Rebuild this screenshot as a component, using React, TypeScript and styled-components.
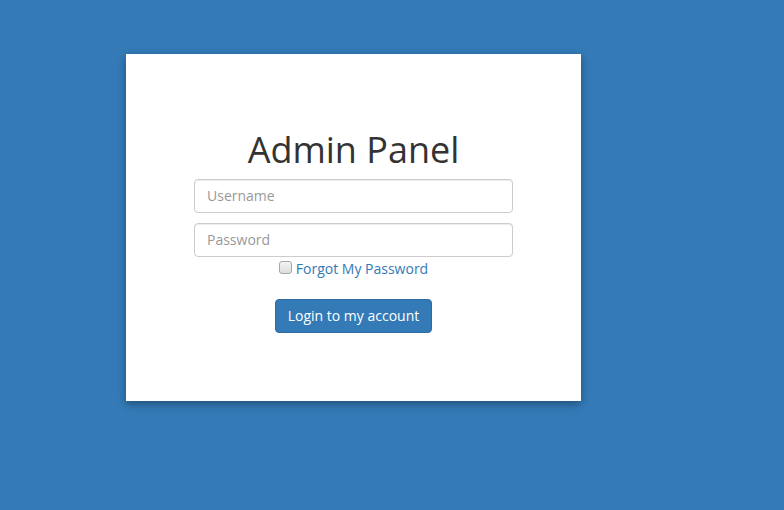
import React from "react";
import styled, { createGlobalStyle } from "styled-components";

const Global = createGlobalStyle`
  html, body { margin: 0; padding: 0; }
  body {
    background: #337ab7;
    font-family: "Open Sans", "Liberation Sans", sans-serif;
    font-size: 14px;
    color: #333;
    width: 784px;
    height: 510px;
    overflow: hidden;
  }
  * { box-sizing: border-box; }
`;

const Page = styled.div`
  padding: 54px 0 0 126px;
`;

const Card = styled.div`
  width: 455px;
  height: 347px;
  background: #fff;
  box-shadow: 0 3px 8px rgba(0, 0, 0, 0.35);
  display: flex;
  flex-direction: column;
  align-items: center;
  padding-top: 76px;
`;

const Title = styled.h1`
  margin: 0 0 9px;
  font-size: 36px;
  font-weight: 400;
  line-height: 40px;
  color: #333;
`;

const Form = styled.form`
  width: 319px;
  display: flex;
  flex-direction: column;
  align-items: center;
`;

const Input = styled.input`
  width: 100%;
  height: 34px;
  padding: 5px 12px 7px;
  border: 1px solid #ccc;
  border-radius: 4px;
  font-family: inherit;
  font-size: 14px;
  color: #555;
  box-shadow: inset 0 1px 1px rgba(0, 0, 0, 0.075);
  margin-bottom: 10px;
  &::placeholder { color: #999; }
`;

const CheckRow = styled.label`
  display: flex;
  align-items: center;
  gap: 4px;
  margin-top: -8px;
  line-height: 20px;
`;

const Check = styled.input`
  appearance: none;
  -webkit-appearance: none;
  margin: -3px 0 0;
  width: 13px;
  height: 13px;
  border: 1px solid #a6a6a6;
  border-radius: 3px;
  background: linear-gradient(#f4f4f4, #dedede);
`;

const Link = styled.a`
  color: #337ab7;
  text-decoration: none;
  font-size: 14px;
`;

const Button = styled.button`
  margin-top: 20px;
  height: 34px;
  padding: 6px 12px;
  background: #337ab7;
  border: 1px solid #2e6da4;
  border-radius: 4px;
  color: #fff;
  font-family: inherit;
  font-size: 14px;
  line-height: 20px;
`;

export default function App() {
  return (
    <>
      <Global />
      <Page>
        <Card>
          <Title>Admin Panel</Title>
          <Form onSubmit={(e) => e.preventDefault()}>
            <Input type="text" placeholder="Username" />
            <Input type="password" placeholder="Password" />
            <CheckRow>
              <Check type="checkbox" />
              <Link href="#">Forgot My Password</Link>
            </CheckRow>
            <Button type="submit">Login to my account</Button>
          </Form>
        </Card>
      </Page>
    </>
  );
}
